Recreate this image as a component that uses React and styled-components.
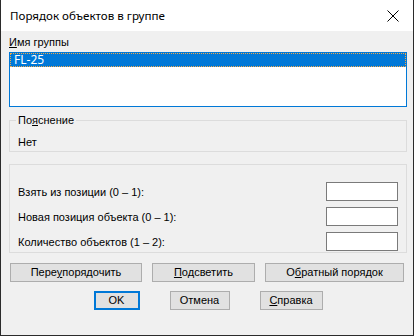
import React from "react";
import styled, { createGlobalStyle } from "styled-components";

const GlobalStyle = createGlobalStyle`
  html, body {
    margin: 0;
    padding: 0;
    background: #ffffff;
  }
`;

// dialog frame
const Window = styled.div`
  width: 414px;
  height: 336px;
  box-sizing: border-box;
  border: 1px solid #2b2b2b;
  border-top: none;
  background: #f0f0f0;
  display: flex;
  flex-direction: column;
  font-family: "Liberation Sans", Arial, sans-serif;
  font-size: 11px;
  color: #000;
`;

const TitleBar = styled.div`
  height: 31px;
  background: #ffffff;
  display: flex;
  align-items: center;
  justify-content: space-between;
  padding: 0 14px 0 9px;
`;

const Title = styled.span`
  font-family: "Noto Sans", "Open Sans", sans-serif;
  font-size: 11.6px;
  color: #000;
`;

const CloseIcon = styled.svg`
  width: 12px;
  height: 12px;
  display: block;
`;

const Body = styled.div`
  flex: 1;
  display: flex;
  flex-direction: column;
  padding: 5px 0 0 8px;
`;

const FieldLabel = styled.div`
  line-height: 13px;
  height: 13px;
`;

const ListBox = styled.div`
  margin-top: 3px;
  width: 398px;
  height: 55px;
  box-sizing: border-box;
  border: 1px solid #0078d7;
  background: #fff;
`;

const ListItem = styled.div`
  height: 14px;
  box-sizing: border-box;
  padding-left: 3px;
  font-family: "Noto Sans", "Open Sans", sans-serif;
  font-size: 12px;
  line-height: 12px;
  color: ${(p) => (p.$selected ? "#fff" : "#000")};
  background: ${(p) => (p.$selected ? "#0078d7" : "transparent")};
  border: 1px dotted ${(p) => (p.$selected ? "#f0a84a" : "transparent")};
`;

const Group = styled.fieldset`
  margin: ${(p) => p.$top}px 0 0 0;
  width: 398px;
  box-sizing: border-box;
  border: 1px solid #dcdcdc;
  padding: ${(p) => p.$pad};
  min-width: 0;
`;

const Legend = styled.legend`
  margin-left: -2px;
  padding: 0 2px;
  line-height: 13px;
  font-size: 11px;
`;

const GroupText = styled.div`
  margin-top: 9px;
  line-height: 13px;
`;

const Rows = styled.div`
  display: flex;
  flex-direction: column;
  gap: 6px;
`;

const Row = styled.div`
  display: flex;
  align-items: center;
  justify-content: space-between;
  height: 19px;
`;

const TextInput = styled.input`
  width: 72px;
  height: 19px;
  box-sizing: border-box;
  border: 1px solid #7a7a7a;
  background: #fff;
  margin: 0;
  padding: 0 2px;
  outline: none;
`;

const ButtonRow = styled.div`
  display: flex;
  gap: ${(p) => p.$gap}px;
  margin-top: ${(p) => p.$top}px;
  padding-left: ${(p) => (p.$center ? 0 : 1)}px;
  justify-content: ${(p) => (p.$center ? "center" : "flex-start")};
  width: ${(p) => (p.$center ? "398px" : "auto")};
`;

const Button = styled.button`
  width: ${(p) => p.$w}px;
  height: 19px;
  box-sizing: border-box;
  margin: 0;
  padding: 0;
  background: #e1e1e1;
  border: ${(p) => (p.$default ? "2px solid #0078d7" : "1px solid #adadad")};
  font-family: "Liberation Sans", Arial, sans-serif;
  font-size: 11px;
  color: #000;
  line-height: 1;
`;

export default function App() {
  return (
    <>
      <GlobalStyle />
      <Window>
        <TitleBar>
          <Title>Порядок объектов в группе</Title>
          <CloseIcon viewBox="0 0 12 12">
            <path d="M0.5 0.5 L11.5 11.5 M11.5 0.5 L0.5 11.5" stroke="#000" strokeWidth="1" fill="none" />
          </CloseIcon>
        </TitleBar>
        <Body>
          <FieldLabel>
            <u>И</u>мя группы
          </FieldLabel>
          <ListBox>
            <ListItem $selected>FL-25</ListItem>
          </ListBox>
          <Group $top={7} $pad="0 8px 2px 8px">
            <Legend>
              По<u>я</u>снение
            </Legend>
            <GroupText>Нет</GroupText>
          </Group>
          <Group $top={12} $pad="17px 8px 1px 8px">
            <Rows>
              <Row>
                <span>Взять из позиции (0 – 1):</span>
                <TextInput />
              </Row>
              <Row>
                <span>Новая позиция объекта (0 – 1):</span>
                <TextInput />
              </Row>
              <Row>
                <span>Количество объектов (1 – 2):</span>
                <TextInput />
              </Row>
            </Rows>
          </Group>
          <ButtonRow $gap={10} $top={10}>
            <Button $w={132}>
              Пере<u>у</u>порядочить
            </Button>
            <Button $w={103}>
              <u>П</u>одсветить
            </Button>
            <Button $w={139}>
              О<u>б</u>ратный порядок
            </Button>
          </ButtonRow>
          <ButtonRow $gap={30} $top={9} $center>
            <Button $w={46} $default>
              OK
            </Button>
            <Button $w={60}>Отмена</Button>
            <Button $w={63}>
              <u>С</u>правка
            </Button>
          </ButtonRow>
        </Body>
      </Window>
    </>
  );
}
